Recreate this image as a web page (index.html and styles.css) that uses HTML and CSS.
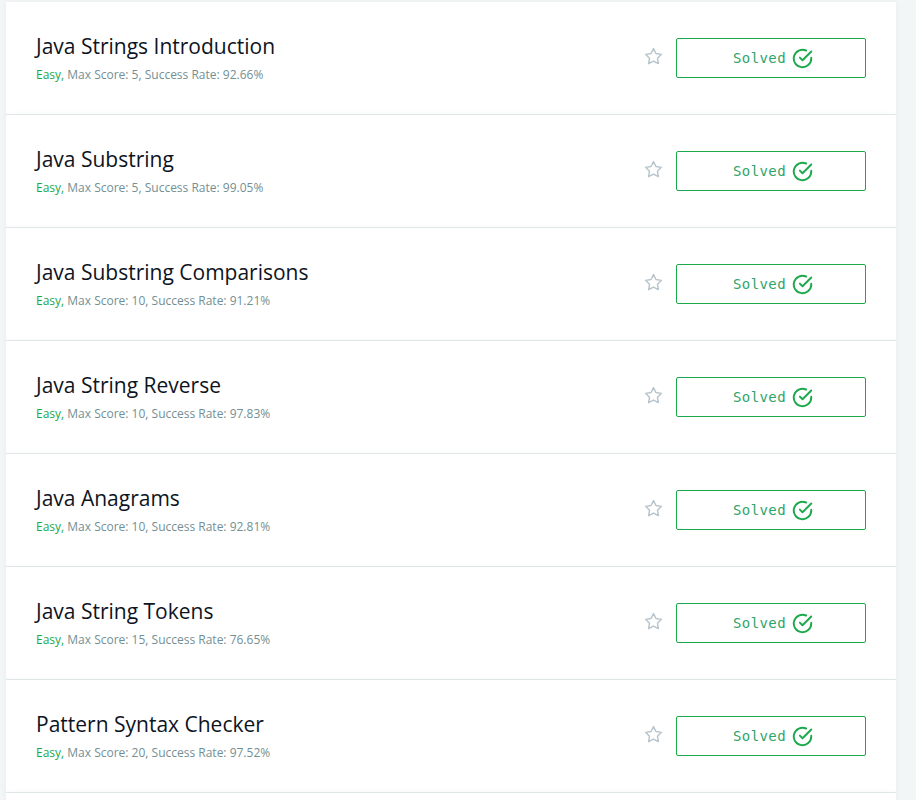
FILE: index.html
```html
<!DOCTYPE html>
<html lang="en">
<head>
<meta charset="utf-8">
<title>Challenges</title>
<link rel="stylesheet" href="styles.css">
</head>
<body>
<svg width="0" height="0" class="defs" aria-hidden="true">
  <defs>
    <symbol id="star" viewBox="0 0 24 24"><polygon points="12 2 15.09 8.26 22 9.27 17 14.14 18.18 21.02 12 17.77 5.82 21.02 7 14.14 2 9.27 8.91 8.26 12 2"/></symbol>
    <symbol id="check" viewBox="0 0 24 24"><path d="M22 11.08V12a10 10 0 1 1-5.930-9.14"/><polyline points="22 4 12 14.01 9 11.01"/></symbol>
  </defs>
</svg>
<div class="list">
  <div class="row">
    <div class="info">
      <h4 class="title">Java Strings Introduction</h4>
      <div class="meta"><span class="easy">Easy,</span> Max Score: 5, Success Rate: 92.66%</div>
    </div>
    <svg class="star"><use href="#star"/></svg>
    <button class="solved">Solved <svg class="check"><use href="#check"/></svg></button>
  </div>
  <div class="row">
    <div class="info">
      <h4 class="title">Java Substring</h4>
      <div class="meta"><span class="easy">Easy,</span> Max Score: 5, Success Rate: 99.05%</div>
    </div>
    <svg class="star"><use href="#star"/></svg>
    <button class="solved">Solved <svg class="check"><use href="#check"/></svg></button>
  </div>
  <div class="row">
    <div class="info">
      <h4 class="title">Java Substring Comparisons</h4>
      <div class="meta"><span class="easy">Easy,</span> Max Score: 10, Success Rate: 91.21%</div>
    </div>
    <svg class="star"><use href="#star"/></svg>
    <button class="solved">Solved <svg class="check"><use href="#check"/></svg></button>
  </div>
  <div class="row">
    <div class="info">
      <h4 class="title">Java String Reverse</h4>
      <div class="meta"><span class="easy">Easy,</span> Max Score: 10, Success Rate: 97.83%</div>
    </div>
    <svg class="star"><use href="#star"/></svg>
    <button class="solved">Solved <svg class="check"><use href="#check"/></svg></button>
  </div>
  <div class="row">
    <div class="info">
      <h4 class="title">Java Anagrams</h4>
      <div class="meta"><span class="easy">Easy,</span> Max Score: 10, Success Rate: 92.81%</div>
    </div>
    <svg class="star"><use href="#star"/></svg>
    <button class="solved">Solved <svg class="check"><use href="#check"/></svg></button>
  </div>
  <div class="row">
    <div class="info">
      <h4 class="title">Java String Tokens</h4>
      <div class="meta"><span class="easy">Easy,</span> Max Score: 15, Success Rate: 76.65%</div>
    </div>
    <svg class="star"><use href="#star"/></svg>
    <button class="solved">Solved <svg class="check"><use href="#check"/></svg></button>
  </div>
  <div class="row">
    <div class="info">
      <h4 class="title">Pattern Syntax Checker</h4>
      <div class="meta"><span class="easy">Easy,</span> Max Score: 20, Success Rate: 97.52%</div>
    </div>
    <svg class="star"><use href="#star"/></svg>
    <button class="solved">Solved <svg class="check"><use href="#check"/></svg></button>
  </div>
  <div class="row"></div>
</div>
</body>
</html>
```
FILE: styles.css
```css
html, body {
  margin: 0;
  padding: 0;
  background: #f3f6f7;
  font-family: "Open Sans", "Noto Sans", sans-serif;
}
.defs { position: absolute; }
.list {
  margin: 2px 20px 0 6px;
  display: flex;
  flex-direction: column;
}
.row {
  height: 112px;
  background: #fff;
  border-bottom: 1px solid #e3eaeb;
  box-shadow: 0 0 6px rgba(60, 80, 90, 0.06);
  display: flex;
  align-items: center;
  padding: 0 30px 0 30px;
  box-sizing: content-box;
}
.info { flex: 1; }
.title {
  margin: 0;
  font-size: 21px;
  font-weight: 400;
  color: #0e141e;
  line-height: 26px;
}
.meta {
  margin-top: 8px;
  font-size: 12px;
  color: #738f93;
  line-height: 16px;
}
.easy { color: #1ba94c; }
.star {
  width: 19px;
  height: 19px;
  fill: none;
  stroke: #b7c4cb;
  stroke-width: 1.8;
  stroke-linejoin: round;
  margin-right: 13px;
  margin-top: -4px;
}
.solved {
  width: 190px;
  height: 40px;
  box-sizing: border-box;
  background: #fff;
  border: 1px solid #1ba94c;
  border-radius: 2px;
  color: #2ea56a;
  font-family: "DejaVu Sans Mono", "Liberation Mono", monospace;
  font-size: 14px;
  letter-spacing: 0.4px;
  display: flex;
  align-items: center;
  justify-content: center;
  gap: 6px;
  padding: 0 0 0 4px;
}
.check {
  width: 21px;
  height: 21px;
  fill: none;
  stroke: #1ba94c;
  stroke-width: 2.2;
  stroke-linecap: round;
  stroke-linejoin: round;
}
```
